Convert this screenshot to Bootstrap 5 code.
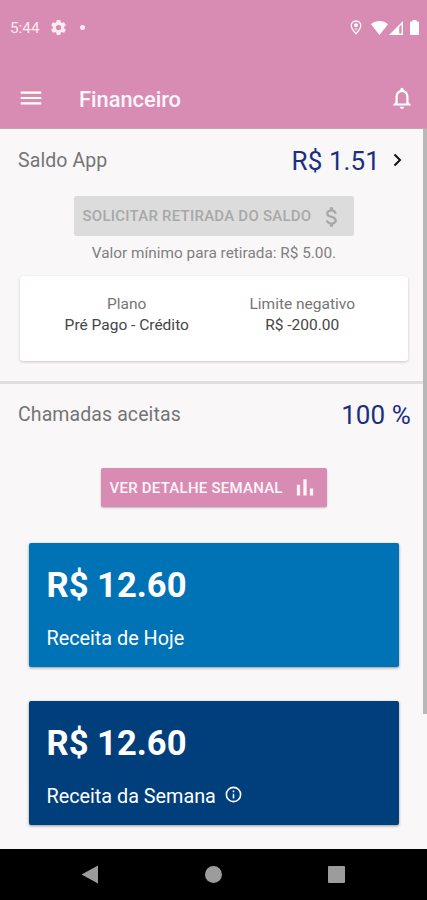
<!DOCTYPE html>
<html lang="pt-BR">
<head>
<meta charset="utf-8">
<meta name="viewport" content="width=device-width, initial-scale=1">
<title>Financeiro</title>
<link href="https://cdn.jsdelivr.net/npm/bootstrap@5.3.0/dist/css/bootstrap.min.css" rel="stylesheet">
<style>
body { font-family: Roboto, "Liberation Sans", sans-serif; background: #f9f7f8; color: #757575; }
svg { display: block; flex: none; fill: currentColor; }
.phone { width: 427px; height: 900px; background: #f9f7f8; line-height: 1; white-space: nowrap; }
.app-top { height: 129px; background: #d98cb3; border-bottom: 1px solid #c9a0b4; }
.status-bar { height: 55px; padding: 0 8px 0 10px; font-size: 15.3px; color: #fdeaf3; }
.clock { padding-top: 2px; }
.gear { margin-left: 11px; }
.dot { margin-left: 14px; }
.wifi { margin-left: 9px; }
.battery { margin-left: 7px; }
.tool-bar { height: 59px; margin-top: 14px; padding: 0 12px 2px 18px; }
.tool-title { font-size: 21.8px; font-weight: 500; margin-left: 35px; padding-top: 5px; color: #fff5fa; }
.line-row { padding: 0 17px 2px 18px; height: 66px; font-size: 19.5px; letter-spacing: .1px; }
.calls-row { height: 60px; padding-bottom: 0; padding-right: 16px; padding-top: 2px; }
.amount { font-size: 26px; color: #1a2f80; }
.chev { margin: 0 8px 2px 13px; color: #111; }
.flat-btn { height: 39px; border-radius: 2px; font-size: 15px; letter-spacing: .24px; font-weight: 500; padding: 1px 9px 0; }
.btn-off { width: 280px; height: 40px; background: #dcdcdc; color: #a8a8a8; margin-top: 1px; }
.btn-week { width: 226px; background: #d98cb3; color: #fff5fa; margin: 24px auto 0; box-shadow: 0 1px 2px rgba(0,0,0,.25); }
.hint { font-size: 15.35px; margin-top: 10px; height: 30px; color: #808080; padding-left: 1px; }
.plan-card { margin: 0 19px 0 20px; height: 85px; border-radius: 3px; box-shadow: 0 1px 3px rgba(0,0,0,.2); font-size: 15.5px; line-height: 21px; padding: 18px 18px 0 19px; }
.plan-card .val { color: #454545; }
.section-line { height: 3px; margin-top: 20px; background: #e0dedf; }
.income { margin: 0 28px 0 29px; height: 124px; border-radius: 2px; padding: 24px 18px 0 17.5px; color: #fff; box-shadow: 0 1px 3px rgba(0,0,0,.4); }
.income-today { background: #0073b7; margin-top: 36px; }
.income-week { background: #003f7c; margin-top: 34px; }
.income .total { font-size: 34.6px; line-height: 36px; font-weight: 700; }
.income .label { font-size: 19.8px; line-height: 22px; margin-top: 25px; height: 22px; }
.info { margin-bottom: 5px; }
.scroll-thumb { right: 0; top: 129px; width: 4px; height: 585px; background: #b9b8b8; }
.nav-keys { height: 51px; background: #000; color: #9c9c9c; padding: 0 82px 0 81px; }
</style>
<script src="https://cdn.jsdelivr.net/npm/bootstrap@5.3.0/dist/js/bootstrap.bundle.min.js"></script>
</head>
<body>
<div class="phone d-flex flex-column position-relative overflow-hidden">
  <header class="app-top">
    <div class="status-bar d-flex align-items-center">
      <span class="clock">5:44</span>
      <svg class="gear" width="15" height="15" viewBox="2 2 20 20"><path d="M19.43 12.98a7.8 7.8 0 0 0 0-1.96l2.11-1.65a.5.5 0 0 0 .12-.64l-2-3.46a.5.5 0 0 0-.61-.22l-2.49 1a7.3 7.3 0 0 0-1.690-.98l-.38-2.650A.49.49 0 0 0 14 2h-4a.49.49 0 0 0-.49.42l-.38 2.650c-.61.25-1.170.59-1.690.98l-2.490-1a.49.49 0 0 0-.61.22l-2 3.460a.49.49 0 0 0 .12.64l2.110 1.650a7.900 7.900 0 0 0 0 1.960l-2.110 1.650a.5.5 0 0 0-.12.64l2 3.460c.12.22.39.3.61.22l2.490-1c.52.4 1.080.73 1.690.98l.38 2.650c.03.24.24.42.49.42h4c.25 0 .46-.18.49-.42l.38-2.650c.61-.25 1.170-.59 1.690-.98l2.490 1c.23.09.49 0 .61-.22l2-3.460a.5.5 0 0 0-.12-.64zM12 15.500a3.500 3.500 0 1 1 0-7 3.500 3.500 0 0 1 0 7z"/></svg>
      <svg class="dot me-auto" width="5" height="5" viewBox="0 0 5 5"><circle cx="2.500" cy="2.500" r="2.500"/></svg>
      <div class="d-flex align-items-center text-white">
        <svg width="12" height="15" viewBox="0 0 12 15"><path d="M6 1C3.200 1 1.300 3 1.300 5.500 1.300 8.800 6 13.800 6 13.800S10.700 8.800 10.700 5.500C10.700 3 8.800 1 6 1z" fill="none" stroke="currentColor" stroke-width="1.300"/><circle cx="6" cy="5.300" r="2"/><path d="M4.300 8.200 6 11l1.700-2.800z" opacity=".6"/></svg>
        <svg class="wifi" width="17" height="14" viewBox="0 0 17 14"><path d="M0 3.300C4.800-1.100 12.200-1.100 17 3.300L8.500 14z"/></svg>
        <svg width="15" height="14" viewBox="0 0 15 14"><path d="M15 0v14H1zM13.600 3.500 11.200 5.900v6.700h2.400z" fill-rule="evenodd"/></svg>
        <svg class="battery" width="9" height="15" viewBox="0 0 9 15"><path d="M2.500 1.500V0h4v1.500H8q1 0 1 1V14q0 1-1 1H1q-1 0-1-1V2.500q0-1 1-1z"/></svg>
      </div>
    </div>
    <div class="tool-bar d-flex align-items-center text-white">
      <svg width="26" height="26" viewBox="0 0 24 24"><path d="M2.500 18h19v-2h-19zm0-5h19v-2h-19zm0-7v2h19V6z"/></svg>
      <span class="tool-title">Financeiro</span>
      <svg class="ms-auto" width="26" height="26" viewBox="0 0 24 24"><path d="M12 22c1.100 0 2-.9 2-2h-4c0 1.100.9 2 2 2zm6-6v-5c0-3.070-1.630-5.640-4.500-6.320V4c0-.83-.67-1.500-1.500-1.500s-1.500.67-1.500 1.500v.68C7.640 5.360 6 7.920 6 11v5l-2 2v1h16v-1l-2-2zm-2 1H8v-6c0-2.480 1.510-4.500 4-4.500s4 2.020 4 4.500v6z"/></svg>
    </div>
  </header>
  <main class="flex-grow-1">
    <div class="line-row d-flex align-items-center">
      <span>Saldo App</span>
      <span class="amount ms-auto">R$ 1.51</span>
      <svg class="chev" width="9" height="14" viewBox="0 0 9 14"><path d="M1.500 1.500 7 7l-5.500 5.500" fill="none" stroke="currentColor" stroke-width="2"/></svg>
    </div>
    <div class="flat-btn btn-off d-flex align-items-center justify-content-between mx-auto">
      <span>SOLICITAR RETIRADA DO SALDO</span>
      <svg width="26" height="26" viewBox="0 0 24 24"><path d="M11.800 10.900c-2.270-.59-3-1.200-3-2.150 0-1.090 1.010-1.850 2.700-1.850 1.780 0 2.440.85 2.500 2.100h2.210c-.07-1.720-1.120-3.300-3.210-3.810V3h-3v2.160c-1.940.42-3.500 1.680-3.500 3.610 0 2.310 1.910 3.460 4.700 4.130 2.500.6 3 1.480 3 2.410 0 .69-.49 1.790-2.700 1.790-2.060 0-2.870-.92-2.980-2.100h-2.200c.12 2.190 1.760 3.420 3.680 3.830V21h3v-2.150c1.950-.37 3.500-1.500 3.500-3.550 0-2.840-2.430-3.810-4.700-4.400z"/></svg>
    </div>
    <div class="hint text-center">Valor mínimo para retirada: R$ 5.00.</div>
    <div class="plan-card bg-white row gx-0 text-center align-content-start">
      <div class="col"><div>Plano</div><div class="val">Pré Pago - Crédito</div></div>
      <div class="col"><div>Limite negativo</div><div class="val">R$ -200.00</div></div>
    </div>
    <div class="section-line"></div>
    <div class="line-row calls-row d-flex align-items-center">
      <span>Chamadas aceitas</span>
      <span class="amount ms-auto">100 %</span>
    </div>
    <div class="flat-btn btn-week d-flex align-items-center justify-content-between">
      <span>VER DETALHE SEMANAL</span>
      <svg width="26" height="26" viewBox="0 0 24 24"><path d="M4.500 9h3v10h-3zM10.500 4h3v15h-3zM16.500 12.500h3V19h-3z"/></svg>
    </div>
    <div class="income income-today">
      <div class="total">R$ 12.60</div>
      <div class="label">Receita de Hoje</div>
    </div>
    <div class="income income-week">
      <div class="total">R$ 12.60</div>
      <div class="label d-flex align-items-center"><span>Receita da Semana</span>
        <svg class="info ms-2" width="19" height="19" viewBox="0 0 24 24"><path d="M11 17h2v-6h-2zm1-15a10 10 0 1 0 0 20 10 10 0 0 0 0-20zm0 18a8 8 0 1 1 0-16 8 8 0 0 1 0 16zM11 9h2V7h-2z"/></svg>
      </div>
    </div>
  </main>
  <footer class="nav-keys d-flex align-items-center justify-content-between">
    <svg width="17" height="19" viewBox="0 0 17 19"><path d="M17 .5v18L.5 9.500z"/></svg>
    <svg width="17" height="17" viewBox="0 0 17 17"><circle cx="8.500" cy="8.500" r="8.500"/></svg>
    <svg width="17" height="17" viewBox="0 0 17 17"><rect width="17" height="17" rx="1"/></svg>
  </footer>
  <div class="scroll-thumb position-absolute"></div>
</div>
</body>
</html>
